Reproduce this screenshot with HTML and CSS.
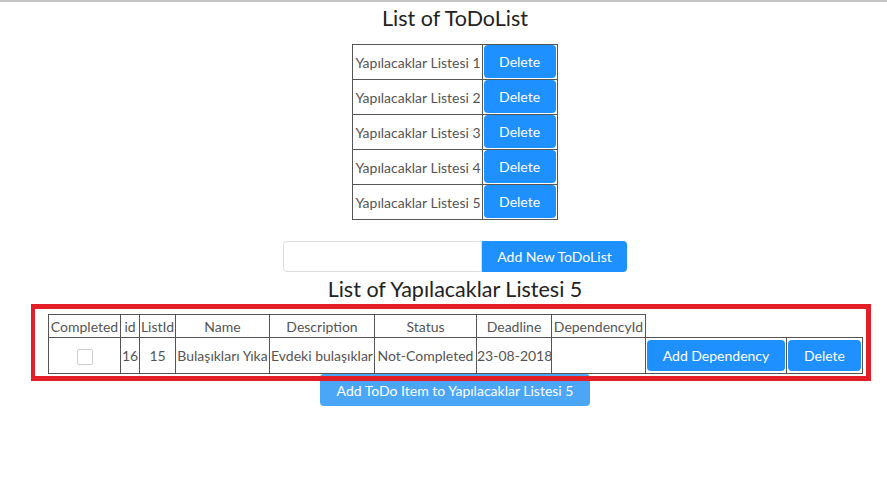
FILE: index.html
```html
<!DOCTYPE html>
<html>
<head>
<meta charset="utf-8">
<link rel="stylesheet" href="styles.css">
</head>
<body>
<div class="page">
  <h2 class="title">List of ToDoList</h2>
  <table class="lists">
    <tr><td class="lname">Yapılacaklar Listesi 1</td><td class="bcell"><button class="btn">Delete</button></td></tr>
    <tr><td class="lname">Yapılacaklar Listesi 2</td><td class="bcell"><button class="btn">Delete</button></td></tr>
    <tr><td class="lname">Yapılacaklar Listesi 3</td><td class="bcell"><button class="btn">Delete</button></td></tr>
    <tr><td class="lname">Yapılacaklar Listesi 4</td><td class="bcell"><button class="btn">Delete</button></td></tr>
    <tr><td class="lname">Yapılacaklar Listesi 5</td><td class="bcell"><button class="btn">Delete</button></td></tr>
  </table>
  <div class="addrow">
    <input class="txt" type="text">
    <button class="btn btn-add">Add New ToDoList</button>
  </div>
  <h2 class="title title2">List of Yapılacaklar Listesi <span class="num">5</span></h2>
  <div class="frame">
    <table class="items">
      <colgroup>
        <col class="w-comp"><col class="w-id"><col class="w-list"><col class="w-name"><col class="w-desc">
        <col class="w-status"><col class="w-dead"><col class="w-dep"><col class="w-adddep"><col class="w-del">
      </colgroup>
      <tr class="head">
        <th>Completed</th>
        <th>id</th>
        <th>ListId</th>
        <th>Name</th>
        <th>Description</th>
        <th>Status</th>
        <th>Deadline</th>
        <th>DependencyId</th>
      </tr>
      <tr class="row">
        <td><span class="check"></span></td>
        <td>16</td>
        <td>15</td>
        <td>Bulaşıkları Yıka</td>
        <td>Evdeki bulaşıklar</td>
        <td>Not-Completed</td>
        <td>23-08-2018</td>
        <td></td>
        <td class="bcell"><button class="btn btn-dep">Add Dependency</button></td>
        <td class="bcell"><button class="btn btn-del">Delete</button></td>
      </tr>
    </table>
  </div>
  <button class="btn btn-item">Add ToDo Item to Yapılacaklar Listesi 5</button>
</div>
</body>
</html>
```
FILE: styles.css
```css
html, body {
  margin: 0;
  padding: 0;
  background: #fff;
}
body {
  border-top: 2px solid #c4c4c4;
  font-family: "Lato", "Liberation Sans", sans-serif;
  color: #555;
  overflow: hidden;
}
.page {
  margin-left: 23px;
  width: 864px;
  display: flex;
  flex-direction: column;
  align-items: center;
}
.title {
  margin: 4px 0 0 0;
  font-size: 21.5px;
  line-height: 24px;
  font-weight: 400;
  color: #222;
}
.title2 {
  margin-top: 5px;
}
.lists {
  margin-top: 14px;
  border-collapse: collapse;
  border: 1px solid #333;
}
.lists td {
  border: 1px solid #555;
  padding: 0 1px 1px 1px;
  font-size: 14px;
  white-space: nowrap;
}
.lists .lname {
  padding: 0 1px 0 2px;
}
.btn {
  font-family: inherit;
  font-size: 14px;
  color: #fff;
  background: #1e90ff;
  border: none;
  border-radius: 4px;
  padding: 0 16px;
  height: 33px;
  cursor: pointer;
}
.lists .btn {
  width: 72px;
  height: 33px;
  padding: 0;
  display: block;
}
.addrow {
  margin-top: 21px;
  display: flex;
}
.txt {
  width: 199px;
  height: 31px;
  box-sizing: border-box;
  border: 1px solid #ddd;
  border-radius: 4px 0 0 4px;
  padding: 0 8px;
}
.btn-add {
  height: 31px;
  width: 145px;
  padding: 0;
  border-radius: 0 4px 4px 0;
}
.frame {
  margin-top: 3px;
  margin-left: -8px;
  width: 840px;
  box-sizing: border-box;
  border: 5px solid #e41e26;
  border-width: 5px 5px 5px 4px;
  padding: 5px 4px 2px 13px;
  position: relative;
  z-index: 1;
}
.items {
  border-collapse: collapse;
  table-layout: fixed;
  width: 814px;
  font-size: 14px;
}
.w-comp { width: 72px; }
.w-id { width: 19px; }
.w-list { width: 36px; }
.w-name { width: 94px; }
.w-desc { width: 105px; }
.w-status { width: 102px; }
.w-dead { width: 75px; }
.w-dep { width: 94px; }
.w-adddep { width: 141px; }
.w-del { width: 76px; }
.items th {
  font-weight: 400;
  border: 1px solid #555;
  padding: 0;
  height: 23px;
  box-sizing: border-box;
  white-space: nowrap;
  overflow: visible;
}
.items td {
  border: 1px solid #555;
  padding: 0;
  text-align: center;
  white-space: nowrap;
  overflow: visible;
}
.items .bcell {
  padding: 2px 1px;
}
.check {
  display: inline-block;
  width: 14px;
  height: 14px;
  border: 1px solid #ccc;
  border-radius: 2px;
  vertical-align: middle;
}
.btn-dep {
  width: 138px;
  height: 31px;
  padding: 0;
  display: block;
}
.btn-del {
  width: 73px;
  height: 31px;
  padding: 0;
  display: block;
}
.btn-item {
  margin-top: -7px;
  width: 270px;
  height: 32px;
  padding: 0;
  background: #4ba6f8;
  position: relative;
  z-index: 0;
}
```
